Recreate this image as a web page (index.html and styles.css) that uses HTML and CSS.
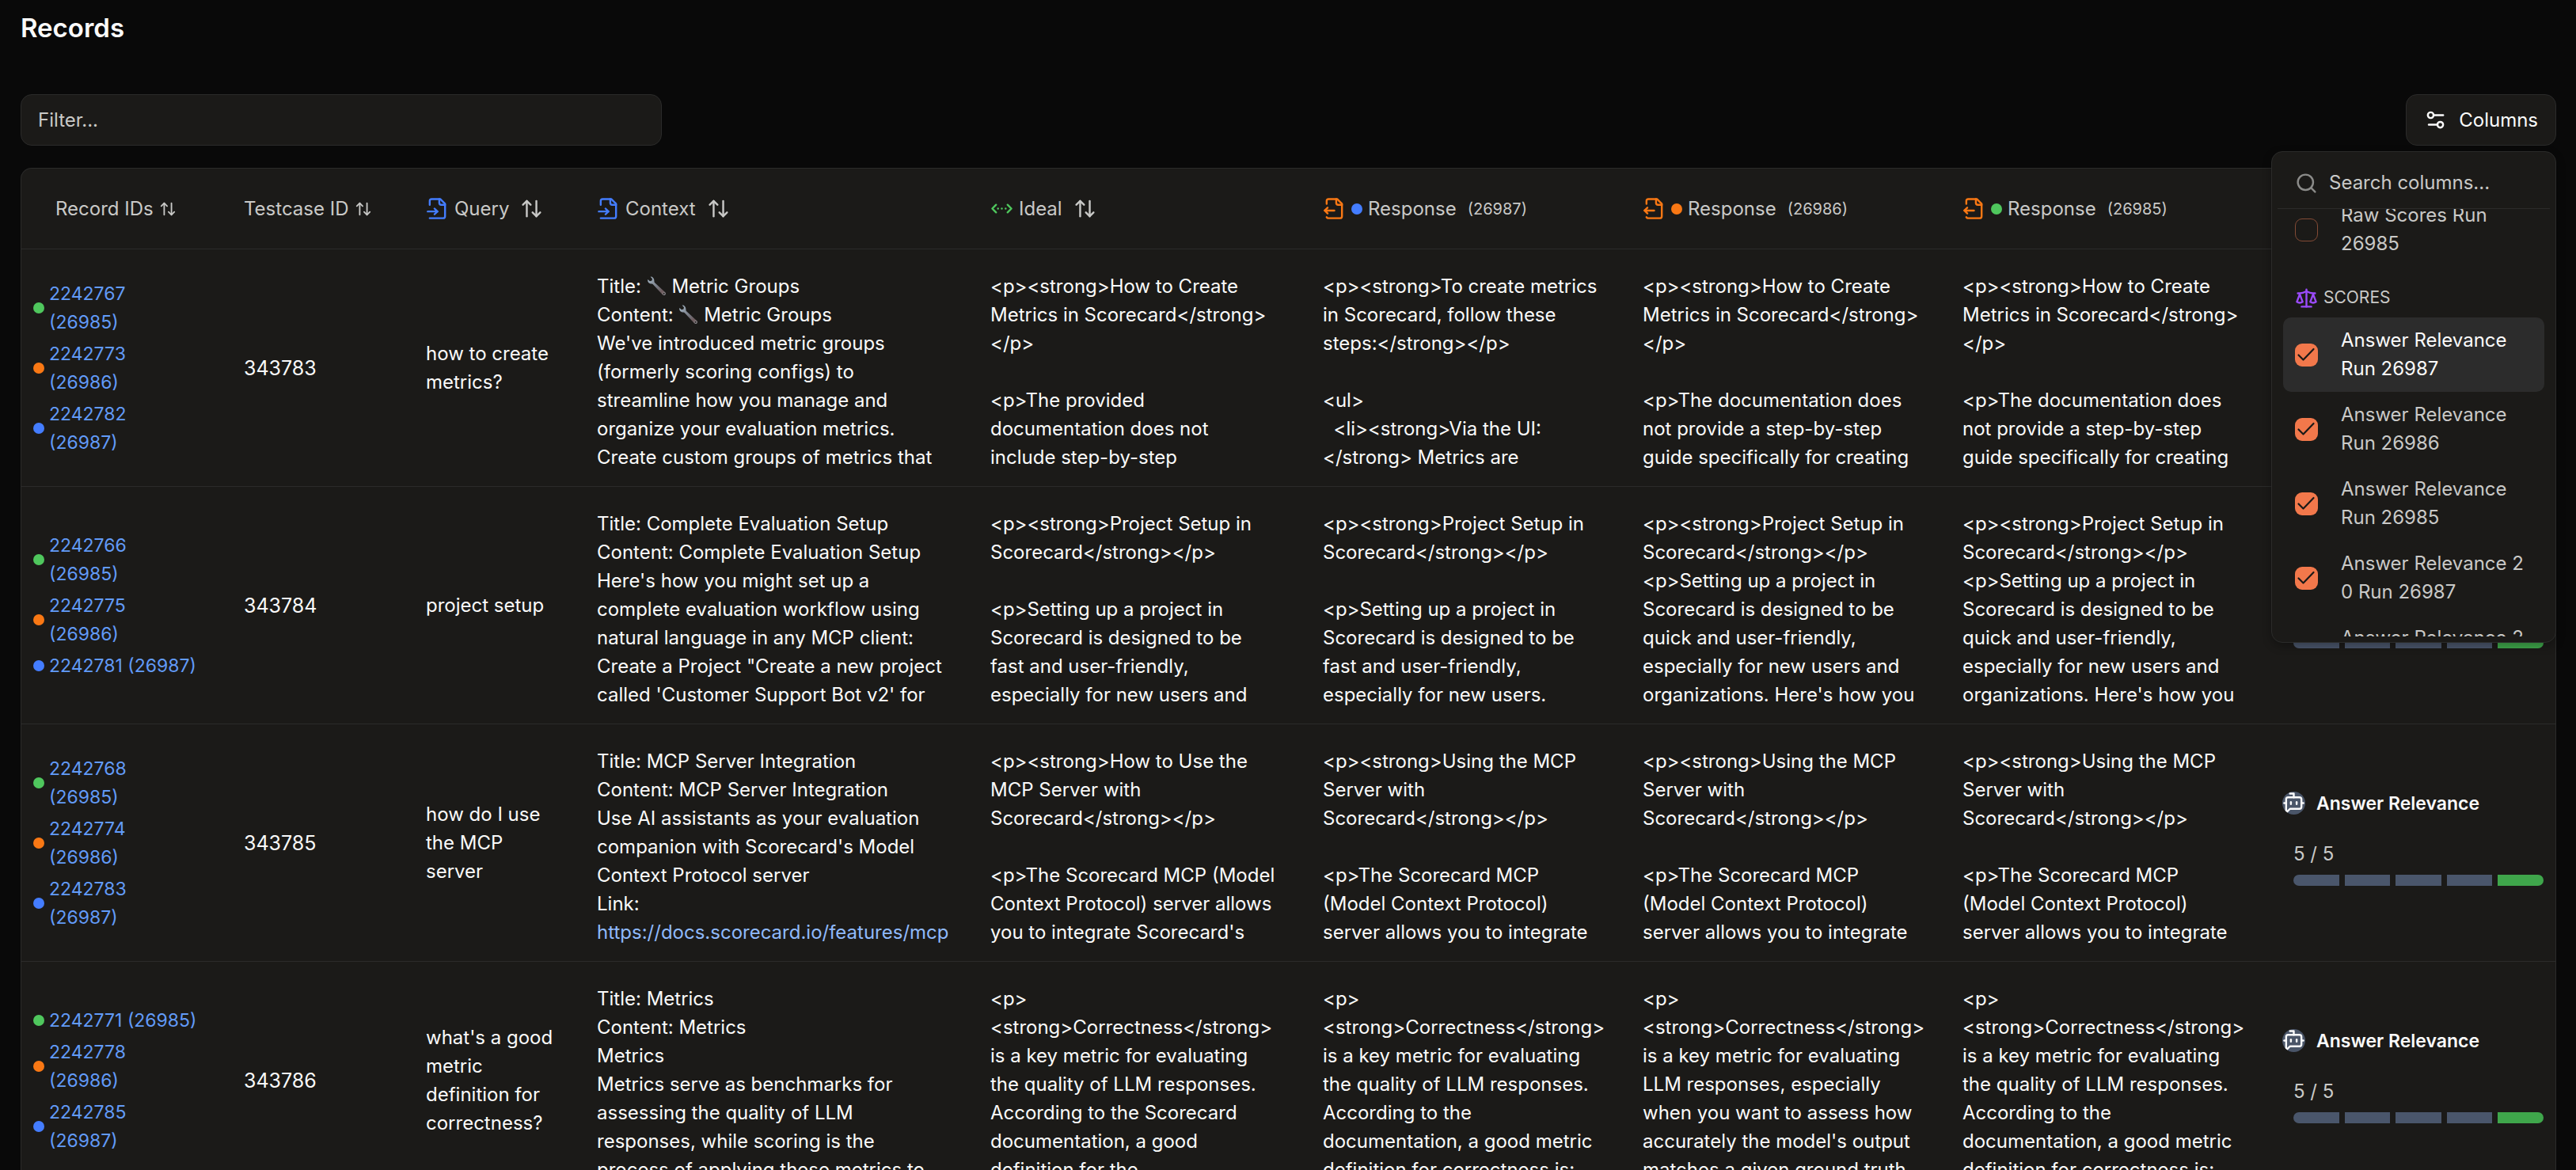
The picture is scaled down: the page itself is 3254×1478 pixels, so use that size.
FILE: index.html
```
<!DOCTYPE html>
<html lang="en">
<head>
<meta charset="utf-8">
<meta name="viewport" content="width=device-width, initial-scale=1">
<title>Records</title>
<link rel="stylesheet" href="styles.css">
</head>
<body>
<svg class="sprite" aria-hidden="true">
  <symbol id="i-input" viewBox="0 0 24 24"><path d="M4 22h14a2 2 0 0 0 2-2V7l-5-5H6a2 2 0 0 0-2 2v4"/><path d="M14 2v4a2 2 0 0 0 2 2h4"/><path d="M2 15h10"/><path d="m9 18 3-3-3-3"/></symbol>
  <symbol id="i-output" viewBox="0 0 24 24"><path d="M14 2v4a2 2 0 0 0 2 2h4"/><path d="M4 7V4a2 2 0 0 1 2-2h9l5 5v13a2 2 0 0 1-2 2H6a2 2 0 0 1-2-1"/><path d="m5 11-3 3"/><path d="m5 17-3-3h10"/></symbol>
  <symbol id="i-ideal" viewBox="0 0 24 24"><path d="m18 8 4 4-4 4"/><path d="m6 8-4 4 4 4"/><path d="M8 12h.01"/><path d="M12 12h.01"/><path d="M16 12h.01"/></symbol>
  <symbol id="i-sort" viewBox="0 0 24 24"><path d="m21 16-4 4-4-4"/><path d="M17 20V4"/><path d="m3 8 4-4 4 4"/><path d="M7 4v16"/></symbol>
  <symbol id="i-settings" viewBox="0 0 24 24"><path d="M20 7h-9"/><path d="M14 17H5"/><circle cx="17" cy="17" r="3"/><circle cx="7" cy="7" r="3"/></symbol>
  <symbol id="i-search" viewBox="0 0 24 24"><circle cx="11" cy="11" r="8"/><path d="m21 21-4.3-4.3"/></symbol>
  <symbol id="i-scale" viewBox="0 0 24 24"><path d="m16 16 3-8 3 8c-.87.65-1.92 1-3 1s-2.13-.35-3-1Z"/><path d="m2 16 3-8 3 8c-.87.65-1.92 1-3 1s-2.13-.35-3-1Z"/><path d="M7 21h10"/><path d="M12 3v18"/><path d="M3 7h2c2 0 5-1 7-2 2 1 5 2 7 2h2"/></symbol>
  <symbol id="i-bot" viewBox="0 0 24 24"><path d="M12 6V2H8"/><path d="m8 18-4 4V8a2 2 0 0 1 2-2h12a2 2 0 0 1 2 2v8a2 2 0 0 1-2 2Z"/><path d="M2 12h2"/><path d="M9 11v2"/><path d="M15 11v2"/><path d="M20 12h2"/></symbol>
  <linearGradient id="steel" x1="0" y1="0" x2="1" y2="1"><stop offset="0" stop-color="#a9bccb"/><stop offset=".55" stop-color="#74767f"/><stop offset=".8" stop-color="#6d5a5c"/><stop offset="1" stop-color="#9a9da3"/></linearGradient>
  <symbol id="i-wrench" viewBox="0 0 24 24"><path d="M4.6.6 6.7 3l-.5 2.3-2.4.6L1.300 3.800C.6 6.200 2.200 8.800 5 9c.9 0 1.500 0 2.300.7L19.200 22.400c.9.9 2.200 1 3.100.2.900-.9.900-2.200 0-3.100L9.800 8c-.7-.8-.7-1.500-.7-2.500C9 2.500 7 .5 4.600.6Z" fill="url(#steel)" stroke="none"/><circle cx="20.800" cy="21" r=".9" fill="#1b1a18" stroke="none"/></symbol>
</svg>

<main class="page">
  <h1 class="title">Records</h1>

  <div class="toolbar">
    <input class="filter" type="text" placeholder="Filter..." aria-label="Filter records">
    <div class="columns">
      <button class="columns-button" type="button" aria-expanded="true"><svg class="icon"><use href="#i-settings"/></svg>Columns</button>
      <div class="menu">
        <label class="menu-search"><svg class="icon"><use href="#i-search"/></svg><input type="text" placeholder="Search columns..." aria-label="Search columns"></label>
        <div class="menu-view">
          <div class="menu-list">
            <label class="option"><input type="checkbox"><span>Raw Scores Run 26985</span></label>
            <div class="group"><svg class="icon"><use href="#i-scale"/></svg>SCORES</div>
            <label class="option is-active"><input type="checkbox" checked><span>Answer Relevance Run 26987</span></label>
            <label class="option"><input type="checkbox" checked><span>Answer Relevance Run 26986</span></label>
            <label class="option"><input type="checkbox" checked><span>Answer Relevance Run 26985</span></label>
            <label class="option"><input type="checkbox" checked><span>Answer Relevance 2<br>0 Run 26987</span></label>
            <label class="option"><input type="checkbox" checked><span>Answer Relevance 2<br>0 Run 26986</span></label>
          </div>
        </div>
      </div>
    </div>
  </div>

  <div class="table-wrap">
    <table class="records">
      <colgroup><col class="c-ids"><col class="c-case"><col class="c-query"><col class="c-context"><col class="c-ideal"><col class="c-resp"><col class="c-resp"><col class="c-resp"><col class="c-score"></colgroup>
      <thead>
        <tr>
          <th><button class="head head-inset" type="button">Record IDs<svg class="icon icon-sm"><use href="#i-sort"/></svg></button></th>
          <th><button class="head" type="button">Testcase ID<svg class="icon icon-sm"><use href="#i-sort"/></svg></button></th>
          <th><button class="head" type="button"><svg class="icon blue"><use href="#i-input"/></svg>Query<svg class="icon sort"><use href="#i-sort"/></svg></button></th>
          <th><button class="head" type="button"><svg class="icon blue"><use href="#i-input"/></svg>Context<svg class="icon sort"><use href="#i-sort"/></svg></button></th>
          <th><button class="head" type="button"><svg class="icon green"><use href="#i-ideal"/></svg>Ideal<svg class="icon sort"><use href="#i-sort"/></svg></button></th>
          <th><div class="head"><svg class="icon orange"><use href="#i-output"/></svg><i class="dot blue"></i>Response<small>(26987)</small></div></th>
          <th><div class="head"><svg class="icon orange"><use href="#i-output"/></svg><i class="dot orange"></i>Response<small>(26986)</small></div></th>
          <th><div class="head"><svg class="icon orange"><use href="#i-output"/></svg><i class="dot green"></i>Response<small>(26985)</small></div></th>
          <td></td>
        </tr>
      </thead>
      <tbody>
        <tr>
          <td><ul class="ids">
            <li><i class="dot green"></i><a href="#2242767">2242767<br>(26985)</a></li>
            <li><i class="dot orange"></i><a href="#2242773">2242773<br>(26986)</a></li>
            <li><i class="dot blue"></i><a href="#2242782">2242782<br>(26987)</a></li>
          </ul></td>
          <td class="case">343783</td>
          <td class="query">how to create metrics?</td>
          <td class="long"><div class="clamp">Title: <svg class="emoji" role="img" aria-label="wrench"><use href="#i-wrench"/></svg> Metric Groups
Content: <svg class="emoji" role="img" aria-label="wrench"><use href="#i-wrench"/></svg> Metric Groups
We've introduced metric groups
(formerly scoring configs) to
streamline how you manage and
organize your evaluation metrics.
Create custom groups of metrics that</div></td>
          <td class="long"><div class="clamp">&lt;p&gt;&lt;strong&gt;How to Create
Metrics in Scorecard&lt;/strong&gt;
&lt;/p&gt;

&lt;p&gt;The provided
documentation does not
include step-by-step</div></td>
          <td class="long"><div class="clamp">&lt;p&gt;&lt;strong&gt;To create metrics
in Scorecard, follow these
steps:&lt;/strong&gt;&lt;/p&gt;

&lt;ul&gt;
  &lt;li&gt;&lt;strong&gt;Via the UI:
&lt;/strong&gt; Metrics are</div></td>
          <td class="long"><div class="clamp">&lt;p&gt;&lt;strong&gt;How to Create
Metrics in Scorecard&lt;/strong&gt;
&lt;/p&gt;

&lt;p&gt;The documentation does
not provide a step-by-step
guide specifically for creating</div></td>
          <td class="long"><div class="clamp">&lt;p&gt;&lt;strong&gt;How to Create
Metrics in Scorecard&lt;/strong&gt;
&lt;/p&gt;

&lt;p&gt;The documentation does
not provide a step-by-step
guide specifically for creating</div></td>
          <td><div class="score"><div class="score-name"><svg class="icon bot"><use href="#i-bot"/></svg>Answer Relevance</div><div class="score-value">5 / 5</div><div class="bar"><i></i><i></i><i></i><i></i><i class="on"></i></div></div></td>
        </tr>
        <tr>
          <td><ul class="ids">
            <li><i class="dot green"></i><a href="#2242766">2242766<br>(26985)</a></li>
            <li><i class="dot orange"></i><a href="#2242775">2242775<br>(26986)</a></li>
            <li><i class="dot blue"></i><a href="#2242781">2242781 (26987)</a></li>
          </ul></td>
          <td class="case">343784</td>
          <td class="query">project setup</td>
          <td class="long"><div class="clamp">Title: Complete Evaluation Setup
Content: Complete Evaluation Setup
Here's how you might set up a
complete evaluation workflow using
natural language in any MCP client:
Create a Project "Create a new project
called 'Customer Support Bot v2' for</div></td>
          <td class="long"><div class="clamp">&lt;p&gt;&lt;strong&gt;Project Setup in
Scorecard&lt;/strong&gt;&lt;/p&gt;

&lt;p&gt;Setting up a project in
Scorecard is designed to be
fast and user-friendly,
especially for new users and</div></td>
          <td class="long"><div class="clamp">&lt;p&gt;&lt;strong&gt;Project Setup in
Scorecard&lt;/strong&gt;&lt;/p&gt;

&lt;p&gt;Setting up a project in
Scorecard is designed to be
fast and user-friendly,
especially for new users.</div></td>
          <td class="long"><div class="clamp">&lt;p&gt;&lt;strong&gt;Project Setup in
Scorecard&lt;/strong&gt;&lt;/p&gt;
&lt;p&gt;Setting up a project in
Scorecard is designed to be
quick and user-friendly,
especially for new users and
organizations. Here's how you</div></td>
          <td class="long"><div class="clamp">&lt;p&gt;&lt;strong&gt;Project Setup in
Scorecard&lt;/strong&gt;&lt;/p&gt;
&lt;p&gt;Setting up a project in
Scorecard is designed to be
quick and user-friendly,
especially for new users and
organizations. Here's how you</div></td>
          <td><div class="score"><div class="score-name"><svg class="icon bot"><use href="#i-bot"/></svg>Answer Relevance</div><div class="score-value">5 / 5</div><div class="bar"><i></i><i></i><i></i><i></i><i class="on"></i></div></div></td>
        </tr>
        <tr>
          <td><ul class="ids">
            <li><i class="dot green"></i><a href="#2242768">2242768<br>(26985)</a></li>
            <li><i class="dot orange"></i><a href="#2242774">2242774<br>(26986)</a></li>
            <li><i class="dot blue"></i><a href="#2242783">2242783<br>(26987)</a></li>
          </ul></td>
          <td class="case">343785</td>
          <td class="query">how do I use the MCP server</td>
          <td class="long"><div class="clamp">Title: MCP Server Integration
Content: MCP Server Integration
Use AI assistants as your evaluation
companion with Scorecard's Model
Context Protocol server
Link:
<a class="doc-link" href="https://docs.scorecard.io/features/mcp">https://docs.scorecard.io/features/mcp</a></div></td>
          <td class="long"><div class="clamp">&lt;p&gt;&lt;strong&gt;How to Use the
MCP Server with
Scorecard&lt;/strong&gt;&lt;/p&gt;

&lt;p&gt;The Scorecard MCP (Model
Context Protocol) server allows
you to integrate Scorecard's</div></td>
          <td class="long"><div class="clamp">&lt;p&gt;&lt;strong&gt;Using the MCP
Server with
Scorecard&lt;/strong&gt;&lt;/p&gt;

&lt;p&gt;The Scorecard MCP
(Model Context Protocol)
server allows you to integrate</div></td>
          <td class="long"><div class="clamp">&lt;p&gt;&lt;strong&gt;Using the MCP
Server with
Scorecard&lt;/strong&gt;&lt;/p&gt;

&lt;p&gt;The Scorecard MCP
(Model Context Protocol)
server allows you to integrate</div></td>
          <td class="long"><div class="clamp">&lt;p&gt;&lt;strong&gt;Using the MCP
Server with
Scorecard&lt;/strong&gt;&lt;/p&gt;

&lt;p&gt;The Scorecard MCP
(Model Context Protocol)
server allows you to integrate</div></td>
          <td><div class="score"><div class="score-name"><svg class="icon bot"><use href="#i-bot"/></svg>Answer Relevance</div><div class="score-value">5 / 5</div><div class="bar"><i></i><i></i><i></i><i></i><i class="on"></i></div></div></td>
        </tr>
        <tr>
          <td><ul class="ids">
            <li><i class="dot green"></i><a href="#2242771">2242771 (26985)</a></li>
            <li><i class="dot orange"></i><a href="#2242778">2242778<br>(26986)</a></li>
            <li><i class="dot blue"></i><a href="#2242785">2242785<br>(26987)</a></li>
          </ul></td>
          <td class="case">343786</td>
          <td class="query">what's a good metric definition for correctness?</td>
          <td class="long"><div class="clamp">Title: Metrics
Content: Metrics
Metrics
Metrics serve as benchmarks for
assessing the quality of LLM
responses, while scoring is the
process of applying these metrics to</div></td>
          <td class="long"><div class="clamp">&lt;p&gt;
&lt;strong&gt;Correctness&lt;/strong&gt;
is a key metric for evaluating
the quality of LLM responses.
According to the Scorecard
documentation, a good
definition for the</div></td>
          <td class="long"><div class="clamp">&lt;p&gt;
&lt;strong&gt;Correctness&lt;/strong&gt;
is a key metric for evaluating
the quality of LLM responses.
According to the
documentation, a good metric
definition for correctness is:</div></td>
          <td class="long"><div class="clamp">&lt;p&gt;
&lt;strong&gt;Correctness&lt;/strong&gt;
is a key metric for evaluating
LLM responses, especially
when you want to assess how
accurately the model's output
matches a given ground truth</div></td>
          <td class="long"><div class="clamp">&lt;p&gt;
&lt;strong&gt;Correctness&lt;/strong&gt;
is a key metric for evaluating
the quality of LLM responses.
According to the
documentation, a good metric
definition for correctness is:</div></td>
          <td><div class="score"><div class="score-name"><svg class="icon bot"><use href="#i-bot"/></svg>Answer Relevance</div><div class="score-value">5 / 5</div><div class="bar"><i></i><i></i><i></i><i></i><i class="on"></i></div></div></td>
        </tr>
      </tbody>
    </table>
  </div>
</main>
</body>
</html>
```
FILE: styles.css
```
:root {
  --bg: #090909;
  --panel: #1b1a18;
  --line: #2b2b2a;
  --text: #fafafa;
  --muted: #c9c9c7;
  --blue: #447dff;
  --orange: #f97814;
  --green: #4fc75d;
}

* { box-sizing: border-box; }

body {
  margin: 0;
  background: var(--bg);
  color: var(--text);
  font: 24px/36px Inter, "Liberation Sans", sans-serif;
}

button, input { font: inherit; color: inherit; margin: 0; }
button { cursor: pointer; }

.sprite { position: absolute; width: 0; height: 0; }

.page {
  display: flex;
  flex-direction: column;
  height: 100vh;
  overflow: hidden;
  padding: 10px 25px 0 26px;
}

.title {
  margin: 0 0 59px;
  font-size: 33px;
  line-height: 50px;
  font-weight: 600;
}

.icon {
  flex: none;
  width: 29px;
  height: 29px;
  fill: none;
  stroke: currentColor;
  stroke-width: 2;
  stroke-linecap: round;
  stroke-linejoin: round;
}
.icon-sm { width: 22px; height: 22px; }
.blue { color: var(--blue); }
.orange { color: var(--orange); }
.green { color: var(--green); }

.dot {
  flex: none;
  width: 14px;
  height: 14px;
  border-radius: 50%;
  background: currentColor;
}

/* Toolbar */
.toolbar {
  display: flex;
  justify-content: space-between;
  margin-bottom: 28px;
}

.filter, .columns-button {
  height: 65px;
  border: 1px solid var(--line);
  border-radius: 14px;
  background: var(--panel);
}
.filter {
  width: 100%;
  max-width: 810px;
  padding: 0 21px;
  outline: none;
}
input::placeholder { color: var(--muted); opacity: 1; }

.columns { position: relative; flex: none; }
.columns-button {
  display: flex;
  align-items: center;
  gap: 15px;
  padding: 0 22px;
}

/* Column picker */
.menu {
  position: absolute;
  z-index: 2;
  top: calc(100% + 7px);
  right: 0;
  width: 360px;
  padding: 7px;
  border: 1px solid var(--line);
  border-radius: 14px;
  background: var(--panel);
  box-shadow: 0 4px 12px rgb(0 0 0 / 30%);
  color: var(--muted);
}
.menu-search {
  display: flex;
  align-items: center;
  gap: 14px;
  height: 65px;
  padding: 0 22px;
  border-bottom: 1px solid var(--line);
}
.menu-search .icon { color: #8b8b89; }
.menu-search input {
  flex: 1;
  min-width: 0;
  padding: 0;
  border: 0;
  outline: none;
  background: none;
}
.menu-view { height: 540px; overflow: hidden; padding: 0 7px; }
/* The list rests part-way through its scroll range */
.menu-list { margin-top: -21px; }

.option {
  display: flex;
  align-items: center;
  gap: 29px;
  padding: 11px 15px;
  border-radius: 10px;
}
.option.is-active { background: #2c2c2c; color: var(--text); }
.option input {
  flex: none;
  appearance: none;
  width: 29px;
  height: 29px;
  border: 1px solid #824a35;
  border-radius: 9px;
}
.option input:checked {
  border: 0;
  background: #f2784b url("data:image/svg+xml,%3Csvg xmlns='http://www.w3.org/2000/svg' viewBox='0 0 29 29'%3E%3Cpath d='M4.500 14.500l6 6L23.500 7' fill='none' stroke='%231b1a18' stroke-width='2.200' stroke-linecap='round' stroke-linejoin='round'/%3E%3C/svg%3E") center / contain;
}
.group {
  display: flex;
  align-items: center;
  gap: 7px;
  height: 64px;
  padding: 14px 15px 0;
  font-size: 21px;
}
.group .icon { color: #9b4bfb; }

/* Records table */
.table-wrap {
  flex: 1;
  min-height: 0;
  overflow: hidden;
  border: 1px solid var(--line);
  border-bottom: 0;
  border-radius: 14px 14px 0 0;
  background: var(--panel);
}
.records {
  width: 100%;
  table-layout: fixed;
  border-spacing: 0;
}
.c-ids { width: 266px; }
.c-case { width: 230px; }
.c-query { width: 216px; }
.c-context { width: 497px; }
.c-ideal { width: 420px; }
.c-resp { width: 404px; }
.c-score { width: 360px; }

.records th, .records td {
  padding: 0 15px;
  border-bottom: 1px solid var(--line);
  text-align: left;
  font-weight: 400;
}
.records thead tr { height: 102px; }
.records tbody tr { height: 300px; }
.records td { vertical-align: middle; }
.records td.query { padding-right: 36px; }
.records td.long { padding: 29px 15px 18px; vertical-align: top; }

.clamp { height: 252px; overflow: hidden; white-space: pre-wrap; }
.emoji { width: 25px; height: 25px; vertical-align: -4px; }
.doc-link { color: #8fb9fb; text-decoration: none; }
.case { font-size: 25px; }

.head {
  display: flex;
  align-items: center;
  gap: 7px;
  padding: 0;
  border: 0;
  background: none;
  color: var(--muted);
}
.head-inset { padding-left: 28px; }
.head .sort { margin-left: 7px; }
.head small { margin-left: 7px; font-size: 20px; }

.ids {
  display: flex;
  flex-direction: column;
  gap: 4px;
  margin: 0;
  padding: 0;
  list-style: none;
}
.ids li { display: flex; align-items: center; gap: 6px; }
.ids a { color: #629bf8; font-size: 23px; text-decoration: none; }

.score { padding: 0 0 14px 14px; }
.score-name {
  display: flex;
  align-items: center;
  gap: 14px;
  margin: 0 0 28px -14px;
  font-size: 23px;
  font-weight: 600;
}
.bot { border-radius: 50%; background: #4a5568; }
.score-value { margin-bottom: 8px; color: var(--muted); }
.bar {
  display: flex;
  gap: 7px;
  height: 14px;
  border-radius: 7px;
  overflow: hidden;
}
.bar i { flex: 1; background: #4a566b; }
.bar .on { background: #3fa64b; }
```
